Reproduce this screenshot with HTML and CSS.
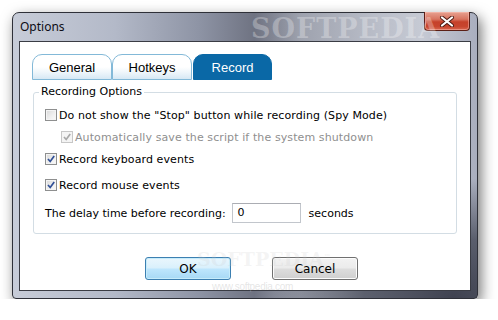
FILE: index.html
```html
<!DOCTYPE html>
<html lang="en">
<head>
    <meta charset="UTF-8">
    <title>Options</title>
    <link rel="stylesheet" href="styles.css">
</head>
<body>

    <!-- dialog window -->
    <div class="window">
        <div class="titlebar">
            <span class="title">Options</span>
            <span class="watermark">SOFTPEDIA</span>
            <button class="close">
                <svg width="16" height="11" viewBox="0 0 16 11">
                    <path d="M3 1.5 L13 9.5 M13 1.5 L3 9.5" stroke="#4a1a12" stroke-width="4" stroke-linecap="round"/>
                    <path d="M3 1.5 L13 9.5 M13 1.5 L3 9.5" stroke="#ffffff" stroke-width="2.2" stroke-linecap="round"/>
                </svg>
            </button>
        </div>

        <div class="client">
            <!-- tabs -->
            <div class="tabs">
                <div class="tab">General</div>
                <div class="tab">Hotkeys</div>
                <div class="tab active">Record</div>
            </div>

            <!-- recording options group -->
            <fieldset class="group">
                <legend>Recording Options</legend>
                <label class="option">
                    <span class="box"></span>Do not show the "Stop" button while recording (Spy Mode)
                </label>
                <label class="option sub disabled">
                    <span class="box"><svg width="10" height="10" viewBox="0 0 10 10"><path d="M2 5 L4.2 7.5 L8.2 2" fill="none" stroke-width="1.7"/></svg></span>Automatically save the script if the system shutdown
                </label>
                <label class="option">
                    <span class="box"><svg width="10" height="10" viewBox="0 0 10 10"><path d="M2 5 L4.2 7.5 L8.2 2" fill="none" stroke-width="1.7"/></svg></span>Record keyboard events
                </label>
                <label class="option spaced">
                    <span class="box"><svg width="10" height="10" viewBox="0 0 10 10"><path d="M2 5 L4.2 7.5 L8.2 2" fill="none" stroke-width="1.7"/></svg></span>Record mouse events
                </label>
                <div class="delay">
                    <span>The delay time before recording:</span>
                    <span class="field">0</span>
                    <span>seconds</span>
                </div>
            </fieldset>

            <!-- dialog buttons -->
            <div class="buttons">
                <button class="btn default">OK</button>
                <button class="btn">Cancel</button>
                <span class="mark">SOFTPEDIA<sup>™</sup></span>
                <span class="mark-url">www.softpedia.com</span>
            </div>
        </div>
    </div>

</body>
</html>
```

FILE: styles.css
```css
/* page */
* {
    box-sizing: border-box;
}

body {
    margin: 0;
    background: #ffffff;
    font-family: "DejaVu Sans", sans-serif;
    font-size: 11px;
    color: #000;
}

/* window frame */
.window {
    width: 466px;
    height: 287px;
    margin: 12px 0 0 12px;
    border: 1px solid #2e3038;
    border-radius: 7px 7px 4px 4px;
    background:
        radial-gradient(ellipse 180px 120px at 95% 100%, #3f4250 0%, rgba(70, 74, 88, 0.8) 50%, rgba(70, 74, 88, 0) 100%),
        linear-gradient(90deg, #c7ccd8 0%, #b3b9c8 22%, #8e94a5 40%, #6f7382 52%, #9ea2ae 62%, #b9bdc8 78%, #c6cad4 88%, #a9aebe 100%);
    box-shadow: 3px 5px 14px rgba(0, 0, 0, 0.55);
}

.titlebar {
    height: 28px;
    display: flex;
    align-items: flex-start;
    position: relative;
    padding-left: 7px;
}

.title {
    font-family: "Noto Sans", sans-serif;
    font-size: 12px;
    line-height: 28px;
    color: #0c0c14;
}

.watermark {
    position: absolute;
    left: 238px;
    top: 0;
    font-family: "DejaVu Serif", serif;
    font-weight: bold;
    font-size: 27px;
    letter-spacing: 1px;
    color: rgba(255, 255, 255, 0.28);
}

.close {
    margin-left: auto;
    margin-right: 7px;
    margin-top: -1px;
    width: 46px;
    height: 19px;
    border: 1px solid #5b1f16;
    border-top: none;
    border-radius: 0 0 4px 4px;
    background: linear-gradient(#e7a190 0%, #d87460 40%, #c5412a 55%, #c7452e 80%, #d8674f 100%);
    box-shadow: inset 0 0 0 1px rgba(255, 200, 190, 0.45);
    display: flex;
    align-items: center;
    justify-content: center;
    padding: 0;
}

/* client area */
.client {
    height: 250px;
    margin: 0 6px;
    border: 1px solid #3a3c44;
    background: #ffffff;
    position: relative;
}

/* tabs */
.tabs {
    display: flex;
    margin: 12px 0 0 12px;
}

.tab {
    width: 80px;
    height: 26px;
    border: 1px solid #83b9d8;
    border-radius: 10px 10px 0 0;
    background: linear-gradient(#ffffff 0%, #ffffff 50%, #e8f2f9 80%, #d6e8f4 100%);
    font-family: "Liberation Sans", sans-serif;
    font-size: 13px;
    text-align: center;
    line-height: 25px;
}

.tab.active {
    margin-left: 1px;
    width: 79px;
    border-color: #0a68a6;
    background: #0a68a6;
    color: #ffffff;
}

/* group box */
.group {
    margin: 5px 13px 0 13px;
    padding: 5px 11px 7px 11px;
    border: 1px solid #d3dde4;
    border-radius: 3px;
}

.group legend {
    margin-left: -6px;
    padding: 0 2px;
    line-height: 14px;
}

.option {
    display: flex;
    align-items: center;
    height: 22px;
    letter-spacing: 0.1px;
}

.option.sub {
    padding-left: 16px;
}

.option.spaced {
    margin-top: 4px;
}

.option.disabled {
    color: #8f8f8f;
}

.box {
    width: 12px;
    height: 12px;
    margin-right: 2px;
    border: 1px solid #8e8f8f;
    background: linear-gradient(135deg, #d8d8d8 0%, #f0f0f0 60%, #fafafa 100%);
    box-shadow: inset 0 0 0 1px #f4f4f4;
    display: flex;
    align-items: center;
    justify-content: center;
}

.box svg path {
    stroke: #304f96;
}

.disabled .box {
    border-color: #c7c7c7;
    background: #f4f4f4;
}

.disabled .box svg path {
    stroke: #a8a8a8;
}

.delay {
    display: flex;
    align-items: center;
    height: 26px;
    margin-top: 4px;
}

.field {
    width: 69px;
    height: 20px;
    margin: 0 8px 0 6px;
    padding-left: 5px;
    border: 1px solid #c2c6cc;
    border-top-color: #abadb3;
    line-height: 18px;
}

/* dialog buttons */
.buttons {
    display: flex;
    gap: 41px;
    margin: 23px 0 0 125px;
    position: relative;
}

.btn {
    width: 86px;
    height: 23px;
    border: 1px solid #707070;
    border-radius: 3px;
    background: linear-gradient(#f2f2f2 0%, #ebebeb 48%, #dddddd 52%, #cfcfcf 100%);
    box-shadow: inset 0 0 0 1px #fcfcfc;
    font-family: "DejaVu Sans", sans-serif;
    font-size: 12px;
    color: #000;
    padding: 0;
}

.btn.default {
    border-color: #3c7fb1;
    background: linear-gradient(#eaf6fd 0%, #d9f0fc 48%, #bee6fd 52%, #a7d9f5 100%);
    box-shadow: inset 0 0 0 1px #c6ecfb;
}

.mark {
    position: absolute;
    left: 52px;
    top: -9px;
    font-family: "DejaVu Serif", serif;
    font-weight: bold;
    font-size: 19px;
    color: rgba(200, 200, 200, 0.2);
}

.mark sup {
    font-size: 7px;
}

.mark-url {
    position: absolute;
    left: 67px;
    top: 24px;
    font-family: "Liberation Sans", sans-serif;
    font-size: 10px;
    letter-spacing: -0.3px;
    color: rgba(180, 180, 180, 0.35);
}
```
